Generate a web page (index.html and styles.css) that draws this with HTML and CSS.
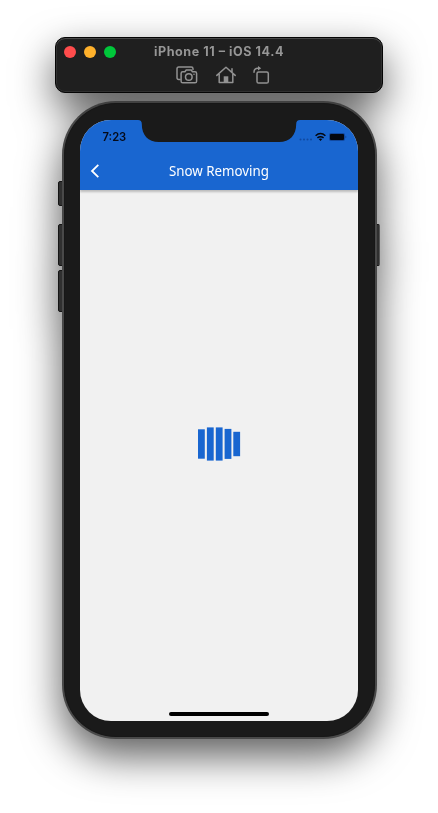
FILE: index.html
```html
<!DOCTYPE html>
<html lang="en">
<head>
<meta charset="utf-8">
<title>iPhone 11 – iOS 14.4</title>
<link rel="stylesheet" href="styles.css">
</head>
<body>
<main class="simulator">
  <header class="toolbar">
    <div class="titlebar">
      <div class="lights"><i class="light red"></i><i class="light amber"></i><i class="light green"></i></div>
      <svg class="window-title" width="132" height="18"><text x="0" y="13" textLength="129.5" lengthAdjust="spacing">iPhone 11 – iOS 14.4</text></svg>
    </div>
    <div class="tools">
      <svg width="22" height="18" viewBox="0 0 22 18"><path d="M4 13.5H2.7Q1 13.5 1 11.8V2.7Q1 1 2.7 1H15.3Q17 1 17 2.7V3.5"/><path d="M6.7 5.8H8.9L10.2 4H15.3L16.5 5.8H19Q20.6 5.8 20.6 7.4V15.2Q20.6 16.8 19 16.8H6.7Q5.1 16.8 5.1 15.2V7.4Q5.1 5.8 6.7 5.8Z"/><circle cx="12.8" cy="11" r="3.3"/><circle class="solid" cx="18" cy="8.2" r=".8"/></svg>
      <svg width="20" height="18" viewBox="0 0 20 18"><path d="M.8 9.4L10 1.2L19.2 9.4M3.2 8V16.6H16.8V8M16 6V2.8"/><path class="solid" d="M7.7 10.3H12.3V16.5H7.7Z"/></svg>
      <svg width="17" height="18" viewBox="0 0 17 18"><rect x="4" y="6" width="11.3" height="11" rx="1.6"/><path d="M1 6.2Q1 2.3 5 2.3H6"/><path class="solid" d="M5 0L8.2 2.3L5 4.6Z"/></svg>
    </div>
  </header>
  <section class="phone">
    <i class="key mute"></i><i class="key up"></i><i class="key down"></i><i class="key power"></i>
    <div class="screen">
      <div class="statusbar">
        <span class="clock">7:23</span>
        <svg class="notch" width="162" height="22" viewBox="0 0 162 22"><path d="M0 0H162Q158.2 0 158.2 4C158.2 15 152 22 141 22H21C10 22 3.8 15 3.8 4Q3.8 0 0 0Z"/></svg>
        <svg class="status-icons" width="48" height="10" viewBox="0 0 48 10">
          <g class="dots"><circle cx="1.5" cy="7.5" r="1"/><circle cx="5" cy="7.5" r="1"/><circle cx="8.5" cy="7.5" r="1"/><circle cx="12" cy="7.5" r="1"/></g>
          <path class="wave" d="M16.6 3.8Q21.5 -.7 26.4 3.8M18.4 5.9Q21.5 3.4 24.6 5.9"/><path d="M19.7 7.1Q21.5 5.8 23.3 7.1L21.5 9Z"/>
          <rect class="cell" x="30" y="1" width="16" height="8" rx="2"/><rect x="31" y="2" width="14" height="6" rx="1"/><path class="tip" d="M46.6 3.6Q48.2 5 46.6 6.4Z"/>
        </svg>
      </div>
      <nav class="navbar">
        <svg class="back" width="10" height="16" viewBox="0 0 10 16"><path d="M8.3 1.8L2 8L8.3 14.2"/></svg>
        <svg class="page-title" width="108" height="26"><text x="0" y="18" textLength="100" lengthAdjust="spacingAndGlyphs">Snow Removing</text></svg>
      </nav>
      <div class="content">
        <svg class="loader" width="44" height="34" viewBox="0 0 44 34">
          <rect x="0" y="2.3" width="6.8" height="29.4"/><rect x="8.9" y=".4" width="6.8" height="33.2"/><rect x="17.8" y=".4" width="6.8" height="33.2"/><rect x="26.6" y="1.9" width="6.8" height="30"/><rect x="35.3" y="4.8" width="6.8" height="24.4"/>
        </svg>
      </div>
      <i class="home-indicator"></i>
    </div>
  </section>
</main>
</body>
</html>
```

FILE: styles.css
```css
* { box-sizing: border-box; }
html, body { margin: 0; background: #fff; }
body { width: 438px; height: 813px; overflow: hidden; }
.simulator {
  width: 438px;
  height: 813px;
  padding-top: 37px;
  display: flex;
  flex-direction: column;
  align-items: center;
  gap: 8px;
  filter: drop-shadow(0 17px 20px rgba(0, 0, 0, .64));
}
svg { display: block; flex: none; overflow: visible; }
i { display: block; }

.toolbar {
  width: 328px;
  height: 56px;
  border: 1px solid #050505;
  border-radius: 10px;
  background: #1f1f1f;
  box-shadow: inset 0 1px #484848, inset 0 0 0 1px #303030;
}
.titlebar {
  height: 27px;
  padding: 1px 0 0 8px;
  display: flex;
  align-items: center;
}
.lights { display: flex; gap: 8px; width: 90px; }
.light { width: 12px; height: 12px; border-radius: 50%; }
.red { background: #ff4c4c; }
.amber { background: #ffb12b; }
.green { background: #00c73a; }
.window-title { font: 700 12.6px Inter, sans-serif; fill: #969696; }
.tools { display: flex; gap: 17.5px; padding: 1px 0 0 120px; }
.tools svg { fill: none; stroke: #929292; stroke-width: 1.5; stroke-linejoin: round; stroke-linecap: round; }
.tools .solid { fill: #929292; stroke: none; }

.phone {
  position: relative;
  width: 315px;
  height: 638px;
  padding: 17px 16px;
  border: 2px solid #494949;
  border-top-color: #414141;
  border-radius: 54px;
  background: #1a1a1a;
  box-shadow: inset 0 0 1px #000;
}
.key {
  position: absolute;
  z-index: -1;
  left: -6px;
  width: 6px;
  height: 42px;
  border: 1px solid #151515;
  border-radius: 2px 0 0 2px;
  background: #303030;
}
.mute { top: 78px; height: 25px; }
.up { top: 121px; }
.down { top: 167px; }
.power { left: auto; right: -5px; top: 121px; border-radius: 0 2px 2px 0; border-right-color: #555; }
.screen {
  width: 278px;
  height: 601px;
  display: flex;
  flex-direction: column;
  align-items: center;
  overflow: hidden;
  border-radius: 31px;
  background: #f1f1f1;
}
.statusbar {
  width: 278px;
  height: 32px;
  display: flex;
  background: #1966d0;
}
.clock {
  width: 58px;
  padding: 10px 0 0 23px;
  font: 600 11.2px/14px Inter, sans-serif;
  color: #050a18;
}
.notch { fill: #1a1a1a; }
.status-icons { margin: 12px 0 0 -1px; fill: #03070f; }
.dots { fill: #1149a0; }
.wave { fill: none; stroke: #03070f; stroke-width: 1.5; }
.cell { fill: #1149a0; }
.tip { fill: #0c3371; }
.navbar {
  width: 278px;
  height: 38px;
  padding-left: 10px;
  display: flex;
  align-items: center;
  background: #1966d0;
  box-shadow: 0 2px 2px rgba(0, 0, 0, .22);
}
.back { fill: none; stroke: #fff; stroke-width: 1.8; }
.page-title { margin-left: 69px; font: 400 14px "Noto Sans", sans-serif; fill: #fff; }
.content {
  flex: 1;
  width: 278px;
  padding: 237px 0 0 118px;
}
.loader { fill: #1966d0; }
.home-indicator { width: 100px; height: 4px; margin-bottom: 5px; border-radius: 2px; background: #000; }
```
